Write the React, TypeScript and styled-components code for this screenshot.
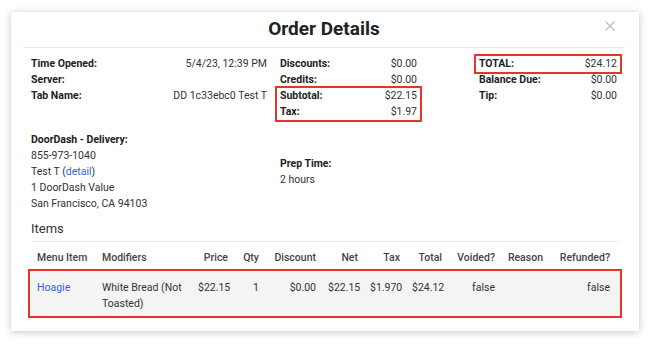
import React from 'react'
import styled, { createGlobalStyle } from 'styled-components'

const GlobalStyle = createGlobalStyle`
  body {
    margin: 0;
    background: #fff;
    font-family: Roboto, "Liberation Sans", sans-serif;
    color: #333;
  }
`

const Page = styled.div`
  padding: 12px 13px 15px 11px;
`

const Modal = styled.div`
  width: 628px;
  background: #fff;
  box-shadow: 0 1px 7px rgba(0, 0, 0, 0.24);
  padding-bottom: 13px;
`

const Header = styled.div`
  position: relative;
  margin: 0 14px 0 12px;
  padding: 7px 0 8px;
  border-bottom: 1px solid #ececec;
  text-align: center;
`

const Title = styled.h1`
  margin: 0;
  font-size: 19px;
  line-height: 20px;
  font-weight: 700;
  color: #222;
`

const CloseButton = styled.button`
  position: absolute;
  right: 9px;
  top: 8px;
  width: 12px;
  height: 12px;
  padding: 0;
  border: 0;
  background: none;
  cursor: pointer;
`

const Body = styled.div`
  padding: 8px 20px 0;
  font-size: 10.5px;
  line-height: 16px;
`

const Summary = styled.div`
  display: flex;
  align-items: flex-start;
`

const Column = styled.div<{ $width: number; $offset?: number }>`
  width: ${p => p.$width}px;
  margin-left: ${p => p.$offset || 0}px;
`

const Row = styled.div`
  display: flex;
  justify-content: space-between;
  white-space: nowrap;
`

const Label = styled.span`
  font-weight: 700;
  color: #222;
`

const Value = styled.span`
  color: #333;
`

const Highlight = styled.div`
  margin: -2px -5px;
  padding: 0 3px;
  border: 2px solid #e8332b;
`

const Details = styled.div`
  display: flex;
  align-items: center;
  margin-top: 12px;
`

const Block = styled.div<{ $width?: number }>`
  width: ${p => (p.$width ? `${p.$width}px` : 'auto')};
`

const Link = styled.a`
  color: #3b5fd9;
  text-decoration: none;
`

const SectionTitle = styled.h2`
  margin: 9px 0 0;
  padding-bottom: 4px;
  border-bottom: 1px solid #ececec;
  font-size: 13px;
  line-height: 16px;
  font-weight: 400;
  color: #333;
`

const columns = '65px 96px 42px 31px 57px 42px 42px 42px 53px 48px 67px'

const HeadRow = styled.div`
  display: grid;
  grid-template-columns: ${columns};
  padding-top: 8px;
  color: #444;
  font-weight: 500;
`

const ItemRow = styled.div`
  display: grid;
  grid-template-columns: ${columns};
  margin: 3px -3px 0;
  padding: 9px 1px 4px;
  border: 2px solid #e8332b;
  background: #f4f4f4;
`

const Cell = styled.div<{ $right?: boolean }>`
  padding: 0 6px;
  text-align: ${p => (p.$right ? 'right' : 'left')};
  white-space: ${p => (p.$right ? 'nowrap' : 'normal')};
  direction: ${p => (p.$right ? 'rtl' : 'ltr')};
  unicode-bidi: plaintext;
`

const heads = [
  'Menu Item', 'Modifiers', 'Price', 'Qty', 'Discount', 'Net', 'Tax', 'Total', 'Voided?', 'Reason', 'Refunded?',
]

const item = ['$22.15', '1', '$0.00', '$22.15', '$1.970', '$24.12', 'false', '', 'false']

export default function App() {
  return (
    <Page>
      <GlobalStyle />
      <Modal>
        <Header>
          <Title>Order Details</Title>
          <CloseButton aria-label="Close">
            <svg width="12" height="12" viewBox="0 0 12 12">
              <path d="M1.5 1.5 L10.5 10.5 M10.5 1.5 L1.5 10.5" stroke="#bdbdbd" strokeWidth="1.3" />
            </svg>
          </CloseButton>
        </Header>
        <Body>
          <Summary>
            <Column $width={236}>
              <Row><Label>Time Opened:</Label><Value>5/4/23, 12:39 PM</Value></Row>
              <Row><Label>Server:</Label><Value></Value></Row>
              <Row><Label>Tab Name:</Label><Value>DD 1c33ebc0 Test T</Value></Row>
            </Column>
            <Column $width={137} $offset={13}>
              <Row><Label>Discounts:</Label><Value>$0.00</Value></Row>
              <Row><Label>Credits:</Label><Value>$0.00</Value></Row>
              <Highlight>
                <Row><Label>Subtotal:</Label><Value>$22.15</Value></Row>
                <Row><Label>Tax:</Label><Value>$1.97</Value></Row>
              </Highlight>
            </Column>
            <Column $width={138} $offset={62}>
              <Highlight>
                <Row><Label>TOTAL:</Label><Value>$24.12</Value></Row>
              </Highlight>
              <Row><Label>Balance Due:</Label><Value>$0.00</Value></Row>
              <Row><Label>Tip:</Label><Value>$0.00</Value></Row>
            </Column>
          </Summary>

          <Details>
            <Block $width={249}>
              <Label>DoorDash - Delivery:</Label>
              <div>855-973-1040</div>
              <div>Test T (<Link href="#">detail</Link>)</div>
              <div>1 DoorDash Value</div>
              <div>San Francisco, CA 94103</div>
            </Block>
            <Block>
              <Label>Prep Time:</Label>
              <div>2 hours</div>
            </Block>
          </Details>

          <SectionTitle>Items</SectionTitle>
          <HeadRow>
            {heads.map((h, i) => (
              <Cell key={h} $right={i > 1}>{h}</Cell>
            ))}
          </HeadRow>
          <ItemRow>
            <Cell><Link href="#">Hoagie</Link></Cell>
            <Cell>White Bread (Not Toasted)</Cell>
            {item.map((v, i) => (
              <Cell key={i} $right>{v}</Cell>
            ))}
          </ItemRow>
        </Body>
      </Modal>
    </Page>
  )
}
